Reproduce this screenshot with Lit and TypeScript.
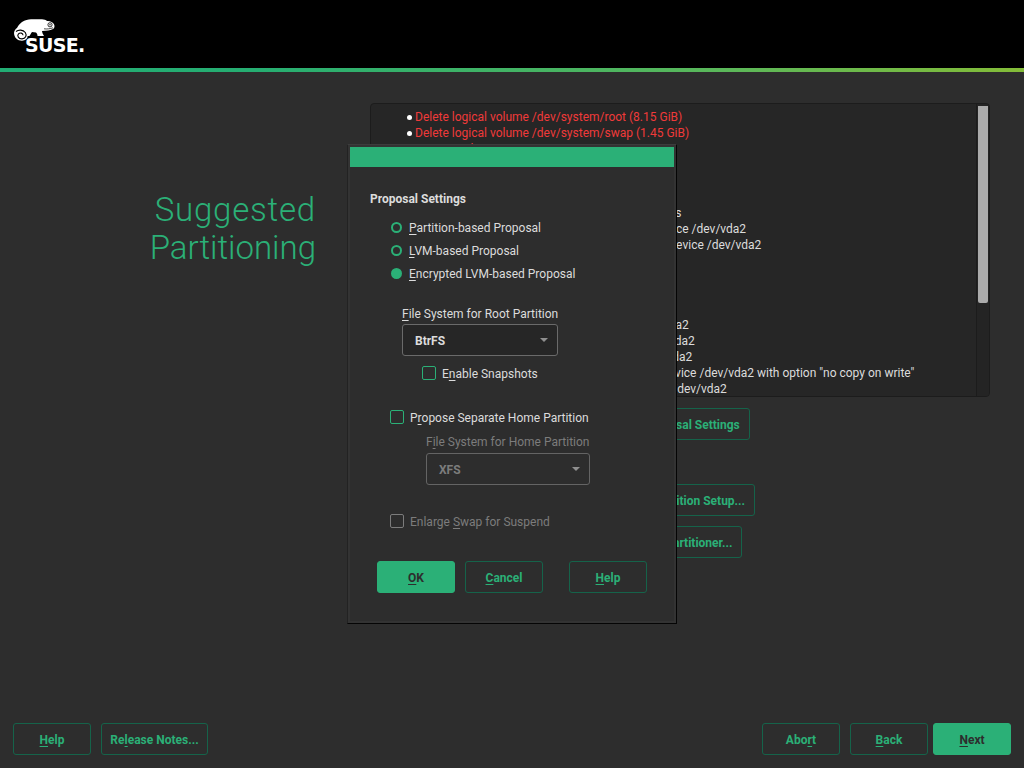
import { LitElement, html, css } from "lit";
import { customElement } from "lit/decorators.js";

const LOG: [string, boolean][] = [
  ["Delete logical volume /dev/system/root (8.15 GiB)", true],
  ["Delete logical volume /dev/system/swap (1.45 GiB)", true],
  ["Remove a lvm group system", true],
  ["Delete partition /dev/vda2 (9.60 GiB)", true],
  ["Delete partition /dev/vda1 (8.00 MiB)", true],
  ["Create partition /dev/vda1 (8.00 MiB)", false],
  ["Create partition /dev/vda2 (9.6 GB) for / with btrfs", false],
  ["Create subvolume @/boot/grub2/i386-pc on device /dev/vda2", false],
  ["Create subvolume @/boot/grub2/x86_64-efi on device /dev/vda2", false],
  ["Create subvolume @/home on device /dev/vda2", false],
  ["Create subvolume @/opt on device /dev/vda2", false],
  ["Create subvolume @/srv on device /dev/vda2", false],
  ["Create subvolume @/tmp on device /dev/vda2", false],
  ["Create subvolume @/usr/local on device /dev/vda2", false],
  ["Create subvolume @/var/cache on device /dev/vda2", false],
  ["Create subvolume @/var/crash on device /dev/vda2", false],
  ['Create subvolume @/var/lib/libvirt/images on device /dev/vda2 with option "no copy on write"', false],
  ["Create subvolume @/var/lib/mailman on device /dev/vda2", false],
];

@customElement("app-root")
export class AppRoot extends LitElement {
  static styles = css`
    :host {
      display: block;
      width: 1024px;
      height: 768px;
      position: relative;
      overflow: hidden;
      background: #2d2d2d;
      font-family: Roboto, "Liberation Sans", sans-serif;
      font-size: 12px;
      color: #dcdcdc;
    }
    u { text-underline-offset: 2px; }
    .page { display: flex; flex-direction: column; height: 768px; }
    .head { height: 68px; background: #000; flex: none; padding: 19px 0 0 14px; box-sizing: border-box; position: relative; }
    .logo { display: block; }
    .logotext { position: absolute; left: 25px; top: 33px; font: 700 19px/24px "DejaVu Sans", sans-serif; color: #fff; letter-spacing: -0.7px; }
    .rule { height: 4px; flex: none; background: linear-gradient(90deg, #22ad74 0%, #26ae72 25%, #5bb85a 70.7%, #84bc38 100%); }
    .main { flex: 1; display: flex; min-height: 0; }
    .titlecol { width: 316px; flex: none; padding-top: 119px; box-sizing: border-box; text-align: right; }
    .title { margin: 0; font-family: Roboto, sans-serif; font-size: 33px; font-weight: 300; line-height: 38px; color: #2bb077; }
    .title span { display: block; }
    .title .l1 { letter-spacing: 0.8px; }
    .contentcol { margin-left: 54px; width: 620px; padding-top: 31px; display: flex; flex-direction: column; }
    .log { width: 620px; height: 294px; box-sizing: border-box; background: #262626; border: 1px solid #1c1c1c; border-radius: 4px; display: flex; overflow: hidden; flex: none; }
    .lines { flex: 1; margin: 0; padding: 5px 0 0 36px; list-style: none; overflow: hidden; }
    .lines li { height: 16px; line-height: 16px; white-space: nowrap; position: relative; padding-left: 8px; }
    .lines li.del { color: #f03a3a; }
    .lines li::before { content: ""; position: absolute; left: 0; top: 6px; width: 5px; height: 5px; border-radius: 50%; background: #fff; }
    .track { width: 13px; flex: none; background: #242424; border-left: 1px solid #1c1c1c; padding: 2px 0 0 1px; box-sizing: border-box; }
    .thumb { width: 10px; height: 197px; background: #ababab; border-radius: 0 0 2px 2px; }
    .btn { box-sizing: border-box; height: 32px; border: 1px solid #15634a; border-radius: 3px; background: transparent; color: #2bb077; font: 700 12px Roboto, sans-serif; display: flex; align-items: center; justify-content: center; padding: 1px 9px 0; white-space: nowrap; }
    .btn.primary { background: #2bb077; border-color: #2bb077; color: #2d2d2d; }
    .actions { width: 620px; display: flex; flex-direction: column; align-items: center; }
    .b1 { margin-top: 11px; }
    .b2 { margin-top: 44px; }
    .b3 { margin-top: 10px; }
    .foot { height: 45px; flex: none; display: flex; padding: 0 13px; box-sizing: border-box; align-items: flex-start; }
    .spacer { flex: 1; }
    .w78 { width: 78px; }
    .w107 { width: 107px; margin-left: 10px; }
    .ml10 { margin-left: 10px; }
    .ml5 { margin-left: 5px; }
    .dialog { position: absolute; left: 347px; top: 144px; width: 330px; height: 480px; box-sizing: border-box; background: #2d2d2d; border: 1px solid; border-color: #3c3c3c #050505 #050505 #222; box-shadow: inset 0 0 0 2px #333; padding: 2px; }
    .bar { height: 20px; background: #2bb077; }
    .body { padding: 24px 0 0 20px; display: flex; flex-direction: column; align-items: flex-start; }
    .h { font-weight: 700; line-height: 16px; margin-bottom: 9px; }
    .radio { display: flex; align-items: center; height: 23px; padding-left: 21px; line-height: 16px; }
    .dot { width: 11px; height: 11px; box-sizing: border-box; border: 2px solid #2bb077; border-radius: 50%; margin-right: 7px; flex: none; }
    .dot.on { background: #2bb077; }
    .label { line-height: 16px; }
    .muted { color: #7c7c7c; }
    .select { box-sizing: border-box; border: 1px solid #6a6a6a; border-radius: 3px; height: 32px; display: flex; align-items: center; justify-content: space-between; font-weight: 700; background: #262626; }
    .select.dis { background: transparent; color: #7c7c7c; border-color: #646464; }
    .arrow { width: 0; height: 0; margin-top: -2px; border-left: 4px solid transparent; border-right: 4px solid transparent; border-top: 4px solid #8f8f8f; }
    .check { display: flex; align-items: flex-start; line-height: 16px; }
    .box { width: 14px; height: 14px; box-sizing: border-box; border: 1px solid #2bb077; border-radius: 2px; flex: none; margin-right: 6px; }
    .box.dis { border-color: #7c7c7c; }
    .root { margin: 21px 0 0 32px; }
    .rootsel { width: 156px; margin: 2px 0 0 32px; padding: 2px 9px 0 12px; }
    .snap { margin: 10px 0 0 52px; }
    .home { margin: 28px 0 0 20px; }
    .homelabel { margin: 8px 0 0 56px; }
    .homesel { width: 164px; margin: 3px 0 0 56px; padding: 2px 9px 0 12px; }
    .swap { margin: 29px 0 0 20px; }
    .dlgbtns { display: flex; margin: 31px 0 0 7px; }
    .dlgbtns .btn { width: 78px; }
    .dlgbtns .c { margin-left: 10px; }
    .dlgbtns .h2 { margin-left: 26px; }
  `;

  render() {
    return html`
      <div class="page">
        <header class="head">
          <svg class="logo" width="42" height="22" viewBox="14 19 42 22" aria-hidden="true">
            <path fill="#fff" d="M14 33C14.300 30.500 15.500 29 17 28C18.500 25 20 23.500 22 22C25 20.300 28 19.500 31 19.300L42 19.300C44 19.500 46 20 47 21C48.500 20.800 50 21 51 21.700C53 22.800 54.500 24 54.500 26C54.500 27.500 54 28.500 52.500 29.300C50 30.500 47 31 42 31C42.300 33 43 34.500 44 36L37.500 36C37.500 34.500 37 33.500 36 32.500L32 32C31 33.500 30 35 29.500 36L27.500 36C27.800 38.500 25.500 40.700 22 40.700C17.500 40.700 14 37.500 14 33Z" />
            <path fill="none" stroke="#000" stroke-width="1.1" d="M16 31.500C18.500 29.500 23 29.500 25.300 32.500C27.200 35.500 25.500 38.700 22 38.900C18.500 39 16.800 35.800 18.500 33.900C20 32.300 23 33 23 35.200" />
            <circle cx="50" cy="24.800" r="2.100" fill="none" stroke="#000" stroke-width="0.800" />
            <circle cx="50" cy="24.800" r="0.700" fill="#000" />
            <path fill="none" stroke="#000" stroke-width="0.700" d="M44 28.800C47 29.300 50 28.800 53 27.800" />
          </svg>
          <span class="logotext">SUSE.</span>
        </header>
        <div class="rule"></div>
        <div class="main">
          <div class="titlecol"><h1 class="title"><span class="l1">Suggested</span><span>Partitioning</span></h1></div>
          <div class="contentcol">
            <div class="log">
              <ul class="lines">
                ${LOG.map(([t, d]) => html`<li class=${d ? "del" : ""}>${t}</li>`)}
              </ul>
              <div class="track"><div class="thumb"></div></div>
            </div>
            <div class="actions">
              <button class="btn b1"><span>Edit Proposal Settings</span></button>
              <button class="btn b2"><span>Create Partition Setup...</span></button>
              <button class="btn b3"><span>Expert Partitioner...</span></button>
            </div>
          </div>
        </div>
        <footer class="foot">
          <button class="btn w78"><span><u>H</u>elp</span></button>
          <button class="btn w107"><span>Re<u>l</u>ease Notes...</span></button>
          <div class="spacer"></div>
          <button class="btn w78"><span>Abo<u>r</u>t</span></button>
          <button class="btn w78 ml10"><span><u>B</u>ack</span></button>
          <button class="btn primary w78 ml5"><span><u>N</u>ext</span></button>
        </footer>
      </div>

      <div class="dialog">
        <div class="bar"></div>
        <div class="body">
          <div class="h">Proposal Settings</div>
          <div class="radio"><span class="dot"></span><span><u>P</u>artition-based Proposal</span></div>
          <div class="radio"><span class="dot"></span><span><u>L</u>VM-based Proposal</span></div>
          <div class="radio"><span class="dot on"></span><span><u>E</u>ncrypted LVM-based Proposal</span></div>
          <div class="label root"><u>F</u>ile System for Root Partition</div>
          <div class="select rootsel"><span>BtrFS</span><span class="arrow"></span></div>
          <div class="check snap"><span class="box"></span><span>E<u>n</u>able Snapshots</span></div>
          <div class="check home"><span class="box"></span><span>P<u>r</u>opose Separate Home Partition</span></div>
          <div class="label muted homelabel">F<u>i</u>le System for Home Partition</div>
          <div class="select dis homesel"><span>XFS</span><span class="arrow"></span></div>
          <div class="check muted swap"><span class="box dis"></span><span>Enlarge <u>S</u>wap for Suspend</span></div>
          <div class="dlgbtns">
            <button class="btn primary"><span><u>O</u>K</span></button>
            <button class="btn c"><span><u>C</u>ancel</span></button>
            <button class="btn h2"><span><u>H</u>elp</span></button>
          </div>
        </div>
      </div>
    `;
  }
}
